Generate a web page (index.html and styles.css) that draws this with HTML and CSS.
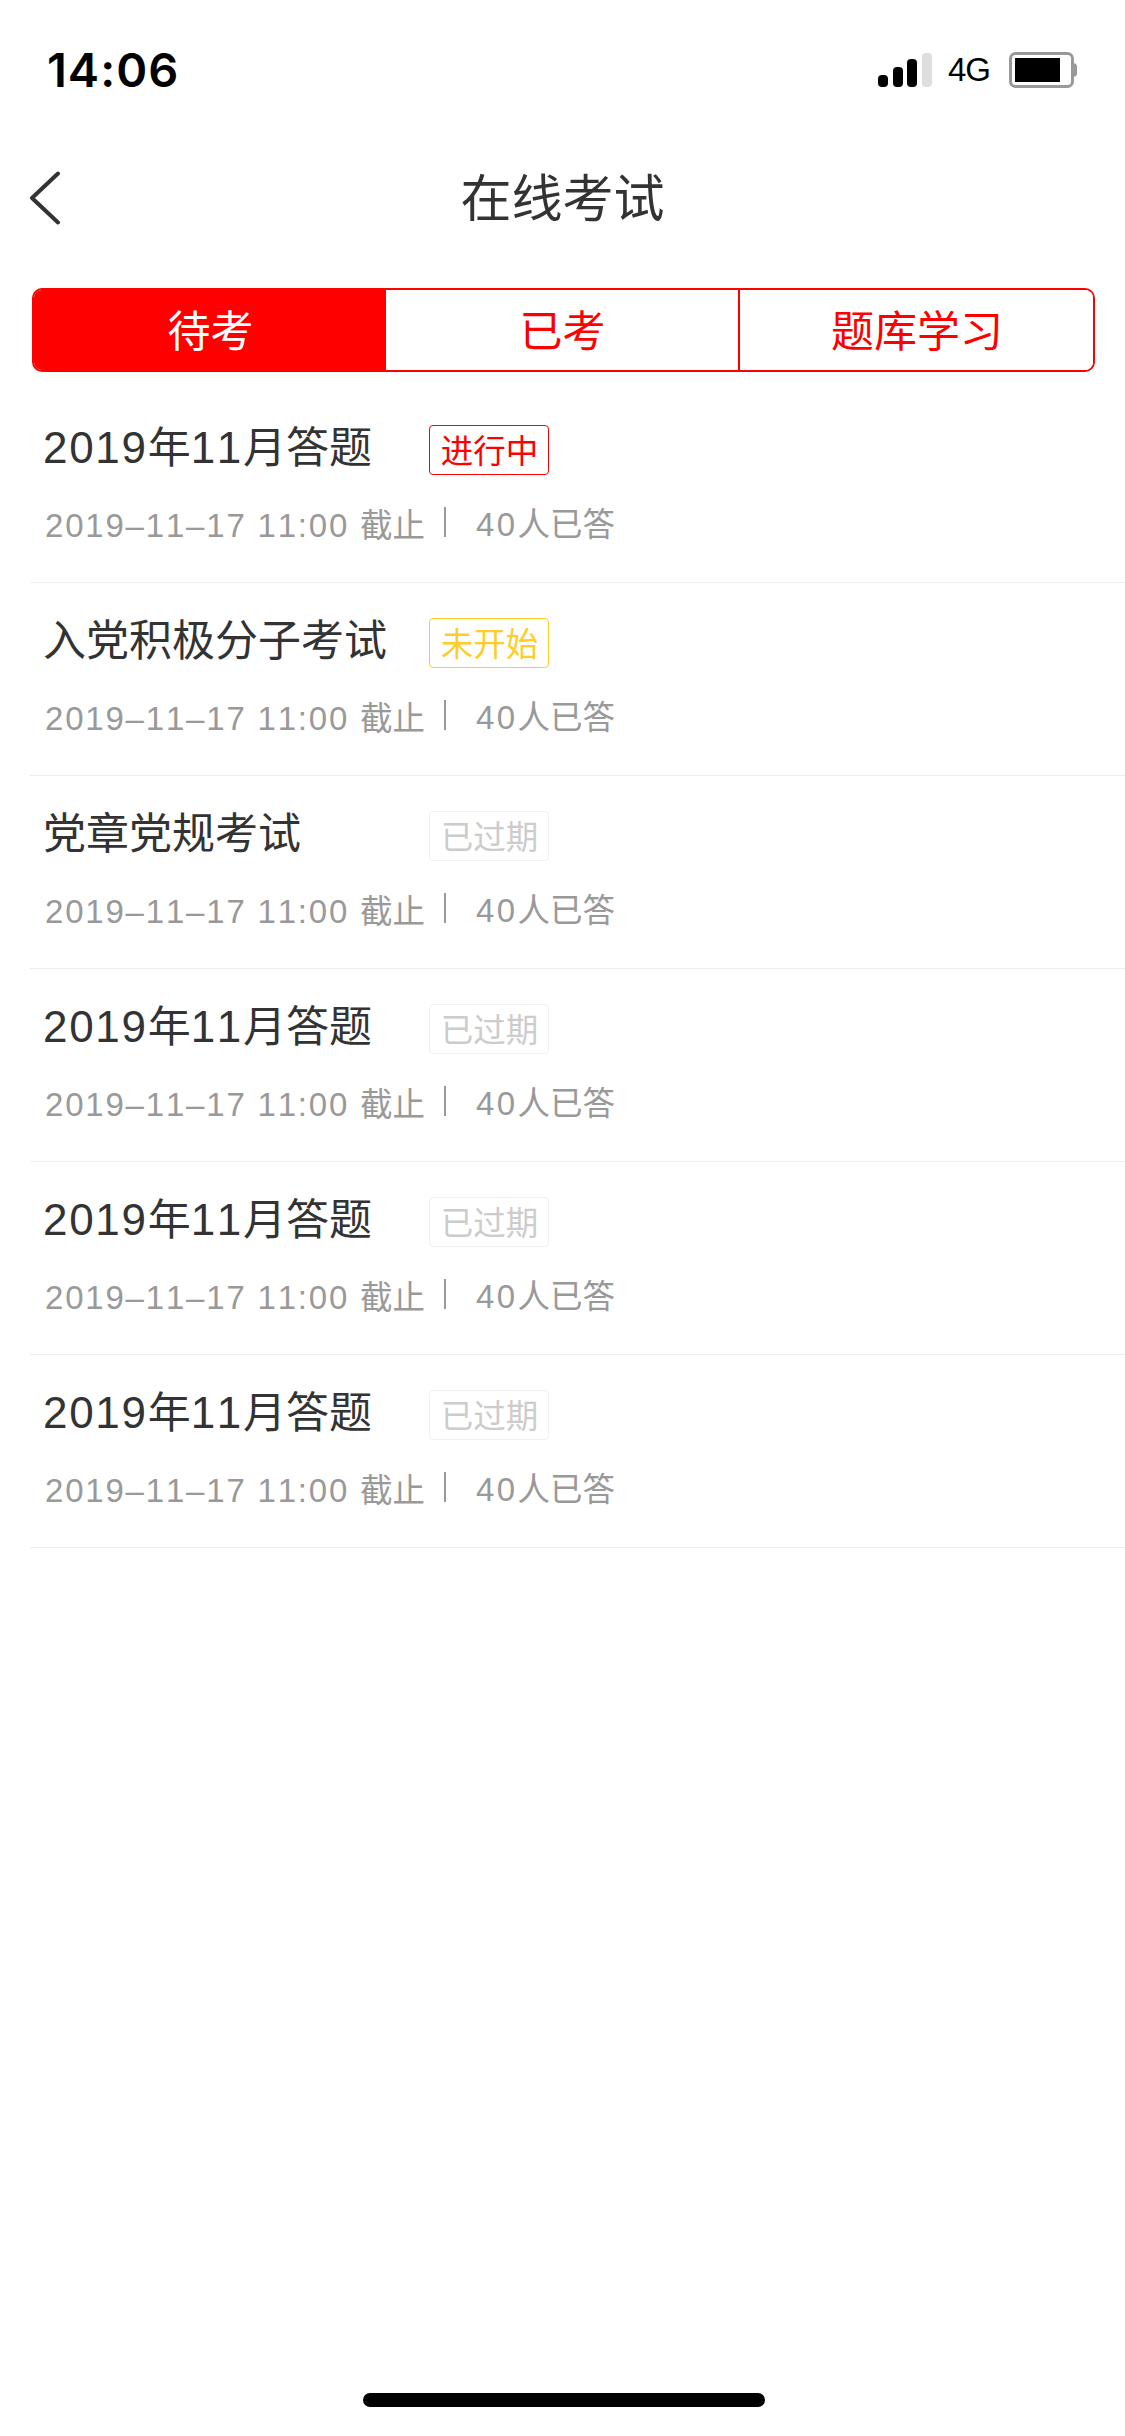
FILE: index.html
```html
<!DOCTYPE html>
<html lang="zh-CN">
<head>
  <meta charset="UTF-8">
  <meta name="viewport" content="width=device-width, initial-scale=1.0">
  <title>在线考试</title>
  <link rel="stylesheet" href="styles.css">
</head>
<body>

  <div class="status-bar">
    <span class="time">14:06</span>
    <div class="status-icons">
      <svg class="signal" width="54" height="34" viewBox="0 0 54 34">
        <rect x="0" y="22" width="10" height="12" rx="4"/>
        <rect x="15" y="14" width="10" height="20" rx="4"/>
        <rect x="29" y="6" width="10" height="28" rx="4"/>
        <rect x="44" y="0" width="10" height="34" rx="4" fill="#dedede"/>
      </svg>
      <span class="network">4G</span>
      <svg class="battery" width="68" height="36" viewBox="0 0 68 36">
        <rect x="1.5" y="1.5" width="62" height="33" rx="5" fill="none" stroke="#999" stroke-width="3"/>
        <path d="M65 11.5h1.5l1.5 2v9l-1.5 2H65z" fill="#999"/>
        <rect x="6" y="6" width="45" height="24"/>
      </svg>
    </div>
  </div>

  <header class="nav">
    <a class="back" href="#" aria-label="返回">
      <svg width="32" height="54" viewBox="0 0 32 54">
        <path d="M29 2.5L3 27L29 51.5" fill="none" stroke="#333" stroke-width="4" stroke-linecap="round" stroke-linejoin="round"/>
      </svg>
    </a>
    <h1>在线考试</h1>
  </header>

  <div class="tabs">
    <button class="tab active" type="button">待考</button>
    <button class="tab" type="button">已考</button>
    <button class="tab" type="button">题库学习</button>
  </div>

  <ul class="exam-list">
    <li class="exam">
      <div class="exam-head">
        <h2><span class="num">2019</span>年<span class="num">11</span>月答题</h2>
        <span class="badge doing">进行中</span>
      </div>
      <div class="exam-info">
        <span class="deadline"><span class="num">2019–11–17 11:00 </span>截止</span>
        <span class="count"><span class="num">40</span>人已答</span>
      </div>
    </li>
    <li class="exam">
      <div class="exam-head">
        <h2>入党积极分子考试</h2>
        <span class="badge waiting">未开始</span>
      </div>
      <div class="exam-info">
        <span class="deadline"><span class="num">2019–11–17 11:00 </span>截止</span>
        <span class="count"><span class="num">40</span>人已答</span>
      </div>
    </li>
    <li class="exam">
      <div class="exam-head">
        <h2>党章党规考试</h2>
        <span class="badge expired">已过期</span>
      </div>
      <div class="exam-info">
        <span class="deadline"><span class="num">2019–11–17 11:00 </span>截止</span>
        <span class="count"><span class="num">40</span>人已答</span>
      </div>
    </li>
    <li class="exam">
      <div class="exam-head">
        <h2><span class="num">2019</span>年<span class="num">11</span>月答题</h2>
        <span class="badge expired">已过期</span>
      </div>
      <div class="exam-info">
        <span class="deadline"><span class="num">2019–11–17 11:00 </span>截止</span>
        <span class="count"><span class="num">40</span>人已答</span>
      </div>
    </li>
    <li class="exam">
      <div class="exam-head">
        <h2><span class="num">2019</span>年<span class="num">11</span>月答题</h2>
        <span class="badge expired">已过期</span>
      </div>
      <div class="exam-info">
        <span class="deadline"><span class="num">2019–11–17 11:00 </span>截止</span>
        <span class="count"><span class="num">40</span>人已答</span>
      </div>
    </li>
    <li class="exam">
      <div class="exam-head">
        <h2><span class="num">2019</span>年<span class="num">11</span>月答题</h2>
        <span class="badge expired">已过期</span>
      </div>
      <div class="exam-info">
        <span class="deadline"><span class="num">2019–11–17 11:00 </span>截止</span>
        <span class="count"><span class="num">40</span>人已答</span>
      </div>
    </li>
  </ul>

  <div class="home-bar"></div>

</body>
</html>
```

FILE: styles.css
```css
* {
  box-sizing: border-box;
}

body {
  margin: 0;
  height: 2436px;
  display: flex;
  flex-direction: column;
  background: #fff;
  color: #333;
  font-family: "Noto Sans CJK SC", sans-serif;
}

h1, h2, ul {
  margin: 0;
  padding: 0;
  font-weight: 400;
}

/* Status bar */
.status-bar {
  height: 132px;
  padding: 8px 48px 0 47px;
  display: flex;
  align-items: center;
  justify-content: space-between;
}

.time {
  font-family: Inter, sans-serif;
  font-size: 47px;
  font-weight: 600;
  line-height: 60px;
  letter-spacing: 1px;
  color: #000;
}

.status-icons {
  display: flex;
  align-items: center;
}

.network {
  margin: 0 19px 0 16px;
  font-family: "Liberation Sans", sans-serif;
  font-size: 33px;
  line-height: 36px;
  letter-spacing: -1px;
  color: #000;
}

/* Title bar */
.nav {
  height: 132px;
  display: grid;
  grid-template-columns: 120px 1fr 120px;
  align-items: center;
}

.back {
  padding-left: 29px;
  display: flex;
}

.nav h1 {
  padding-bottom: 6px;
  font-size: 51px;
  line-height: 76px;
  text-align: center;
}

/* Tabs */
.tabs {
  margin: 24px 30px 0 32px;
  height: 84px;
  flex: none;
  display: grid;
  grid-template-columns: 350px 354px 1fr;
  border: 2px solid #f00;
  border-radius: 10px;
  overflow: hidden;
}

.tab {
  padding: 0 0 3px 1px;
  border: none;
  border-left: 2px solid #f00;
  background: #fff;
  color: #f00;
  font-family: inherit;
  font-size: 43px;
  line-height: 77px;
}

.tab:first-child {
  padding-left: 3px;
  border-left: none;
}

.tab.active {
  background: #f00;
  color: #fff;
}

/* Exam list */
.exam-list {
  margin-top: 18px;
  padding-left: 30px;
  list-style: none;
}

.exam {
  height: 193px;
  padding: 22px 0 0 13px;
  border-bottom: 1px solid #eee;
}

.exam-head {
  height: 70px;
  display: flex;
}

.exam-head h2 {
  width: 386px;
  font-size: 43px;
  line-height: 64px;
}

.num {
  font-family: "Liberation Sans", sans-serif;
  font-kerning: none;
  white-space: pre;
}

.exam-head .num {
  font-size: 44px;
  letter-spacing: 1.7px;
}

.badge {
  width: 120px;
  height: 50px;
  margin-top: 13px;
  padding-left: 1px;
  border: 1px solid;
  border-radius: 4px;
  font-size: 32.5px;
  line-height: 46px;
  text-align: center;
}

.doing {
  color: #f00;
}

.waiting {
  color: #ffcd29;
}

.expired {
  color: #ccc;
  border-color: #f0f0f0;
}

.exam-info {
  padding: 20px 0 0 2px;
  display: flex;
  font-size: 32.5px;
  line-height: 40px;
  color: #999;
}

.deadline {
  padding-top: 1px;
}

.exam-info .num {
  font-size: 33px;
  letter-spacing: 1.8px;
}

/* thin divider between the deadline and the count */
.count {
  margin-left: 19px;
}

.count::before {
  content: "";
  display: inline-block;
  width: 2px;
  height: 30px;
  margin-right: 30px;
  vertical-align: -1px;
  background: #999;
}

.count .num {
  letter-spacing: 2.3px;
}

/* Home indicator */
.home-bar {
  width: 402px;
  height: 14px;
  margin: auto auto 29px 363px;
  border-radius: 7px;
  background: #000;
}
```
